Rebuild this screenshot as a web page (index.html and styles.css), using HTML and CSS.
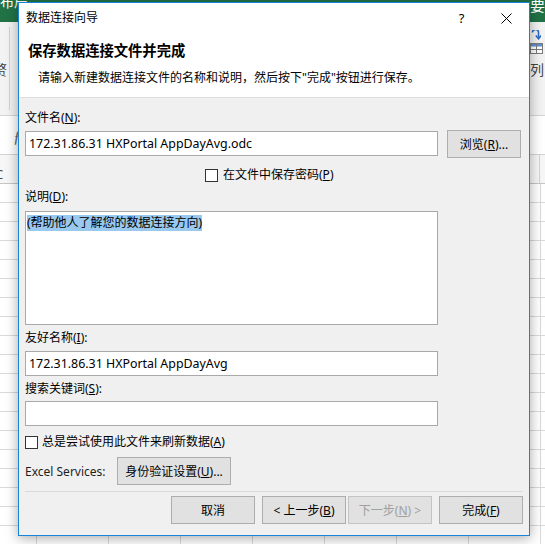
FILE: index.html
```html
<!DOCTYPE html>
<html lang="zh-CN">
<head>
    <meta charset="UTF-8">
    <title>数据连接向导</title>
    <link rel="stylesheet" href="styles.css">
</head>
<body>
    <!-- Excel window behind the dialog -->
    <div class="excel">
        <div class="tabs">
            <span class="tab-text">布局</span>
            <span class="tab-text tab-right">要</span>
        </div>
        <div class="ribbon">
            <div class="ribbon-left">
                <span class="cut-glyph">赘</span>
                <span class="ribbon-sep"></span>
            </div>
            <div class="ribbon-right">
                <svg class="rb-arrow" width="10" height="10" viewBox="0 0 10 10">
                    <path d="M1.5 2.5 A3 3 0 0 1 7.5 2.5 L7.5 8" fill="none" stroke="#2b6cc4" stroke-width="1.6"/>
                    <path d="M4.8 5.6 L7.5 8.8 L10 5.6" fill="none" stroke="#2b6cc4" stroke-width="1.6"/>
                </svg>
                <svg class="rb-grid" width="13" height="11" viewBox="0 0 13 11">
                    <rect x="0.5" y="0.5" width="12" height="10" fill="#fff" stroke="#7a7a7a"/>
                    <rect x="1" y="1" width="11" height="2.5" fill="#5b8fd4"/>
                    <path d="M6.5 1 V10 M1 6.5 H12" stroke="#7a7a7a"/>
                </svg>
                <span class="rb-label">列</span>
            </div>
        </div>
        <div class="formula-bar"><span class="fx">ƒ</span></div>
        <div class="col-heads"><span class="col-c">C</span></div>
        <div class="cells"></div>
    </div>

    <div class="dialog">
        <div class="titlebar">
            <span class="title">数据连接向导</span>
            <div class="caption-btns">
                <span class="cap-btn help">?</span>
                <span class="cap-btn">
                    <svg width="11" height="11" viewBox="0 0 11 11">
                        <path d="M0.5 0.5 L10.5 10.5 M10.5 0.5 L0.5 10.5" stroke="#000" stroke-width="1"/>
                    </svg>
                </span>
            </div>
        </div>

        <div class="header">
            <h1>保存数据连接文件并完成</h1>
            <p>请输入新建数据连接文件的名称和说明，然后按下"完成"按钮进行保存。</p>
        </div>

        <div class="body">
            <div class="field-label">文件名(<u>N</u>):</div>
            <div class="file-row">
                <div class="textbox">172.31.86.31 HXPortal AppDayAvg.odc</div>
                <button class="btn browse">浏览(<u>R</u>)...</button>
            </div>

            <div class="check-row save-pwd">
                <span class="checkbox"></span>
                <span>在文件中保存密码(<u>P</u>)</span>
            </div>

            <div class="field-label desc-label">说明(<u>D</u>):</div>
            <div class="textarea"><span class="selected">(帮助他人了解您的数据连接方向)</span></div>

            <div class="field-label">友好名称(<u>I</u>):</div>
            <div class="textbox wide">172.31.86.31 HXPortal AppDayAvg</div>

            <div class="field-label">搜索关键词(<u>S</u>):</div>
            <div class="textbox wide keywords"></div>

            <div class="check-row always">
                <span class="checkbox"></span>
                <span>总是尝试使用此文件来刷新数据(<u>A</u>)</span>
            </div>

            <div class="services-row">
                <span class="services-label">Excel Services:</span>
                <button class="btn auth">身份验证设置(<u>U</u>)...</button>
            </div>

            <div class="divider"></div>

            <div class="button-row">
                <button class="btn nav">取消</button>
                <button class="btn nav back">&lt; 上一步(<u>B</u>)</button>
                <button class="btn nav" disabled>下一步(<u>N</u>) &gt;</button>
                <button class="btn nav finish">完成(<u>F</u>)</button>
            </div>
        </div>
    </div>
</body>
</html>
```

FILE: styles.css
```css
* {
    box-sizing: border-box;
}
html, body {
    margin: 0;
    padding: 0;
}
body {
    width: 545px;
    height: 544px;
    overflow: hidden;
    position: relative;
    font-family: "Noto Sans", "Noto Sans CJK SC", sans-serif;
    font-size: 12px;
    color: #000;
    background: #fff;
}

/* ---- excel background ---- */
.excel {
    display: flex;
    flex-direction: column;
    height: 544px;
}
.tabs {
    height: 22px;
    flex: none;
    background: #217346;
    color: #fff;
    display: flex;
    justify-content: space-between;
    overflow: hidden;
}
.tab-text {
    font-size: 14px;
    line-height: 16px;
    margin-top: -6px;
}
.tab-right {
    margin-top: -3px;
    font-size: 15px;
}
.ribbon {
    height: 94px;
    flex: none;
    background: #f3f3f3;
    border-bottom: 1px solid #d5d5d5;
    display: flex;
    justify-content: space-between;
    overflow: hidden;
}
.ribbon-left {
    display: flex;
}
.cut-glyph {
    font-size: 14px;
    line-height: 16px;
    color: #444;
    margin: 40px 0 0 -7px;
}
.ribbon-sep {
    width: 1px;
    height: 83px;
    margin: 5px 0 0 2px;
    background: #d2d2d2;
}
.ribbon-right {
    width: 15px;
    display: flex;
    flex-direction: column;
    padding-top: 8px;
}
.rb-arrow {
    margin-left: 1px;
}
.rb-grid {
    margin-top: 3px;
}
.rb-label {
    font-size: 14px;
    line-height: 16px;
    color: #444;
    margin-top: 8px;
}
.formula-bar {
    height: 39px;
    flex: none;
    background: #fff;
    border-bottom: 1px solid #d4d4d4;
}
.fx {
    display: inline-block;
    margin: 12px 0 0 13px;
    font-family: "Liberation Serif", serif;
    font-style: italic;
    font-size: 16px;
    color: #666;
}
.col-heads {
    height: 29px;
    flex: none;
    background: #f7f7f7 linear-gradient(to right, transparent 539px, #d4d4d4 539px, #d4d4d4 540px, transparent 540px);
    border-bottom: 1px solid #c6c6c6;
    overflow: hidden;
}
.col-c {
    display: inline-block;
    margin: 10px 0 0 -5px;
    font-size: 13px;
    color: #444;
}
.cells {
    flex: 1;
    background-color: #fff;
    background-image:
        linear-gradient(to bottom, transparent 18px, #dadada 18px),
        linear-gradient(to right, transparent 36px, #dadada 36px, #dadada 37px, transparent 37px);
    background-size: 100% 19px, 72px 100%;
}

/* ---- dialog ---- */
.dialog {
    position: absolute;
    left: 18px;
    top: 2px;
    width: 512px;
    height: 534px;
    border: 1px solid #1883d7;
    background: #f0f0f0;
    box-shadow: 0 2px 12px rgba(0, 0, 0, 0.35);
    display: flex;
    flex-direction: column;
}
.titlebar {
    height: 30px;
    background: #fff;
    display: flex;
    justify-content: space-between;
}
.title {
    padding-left: 7px;
    line-height: 29px;
}
.caption-btns {
    display: flex;
}
.cap-btn {
    width: 46px;
    height: 30px;
    display: flex;
    align-items: center;
    justify-content: center;
}
.cap-btn.help {
    font-size: 13px;
    padding-left: 3px;
}
.header {
    background: #fff;
    padding: 8px 0 10px;
    border-bottom: 1px solid #dfdfdf;
}
.header h1 {
    margin: 0 0 8px 9px;
    font-size: 14.3px;
    line-height: 20px;
    font-weight: bold;
}
.header p {
    margin: 0 0 0 19px;
    line-height: 18px;
}
.body {
    flex: 1;
    padding: 12px 6px 0 6px;
    display: flex;
    flex-direction: column;
}
.field-label {
    line-height: 16px;
    margin-top: 5px;
}
.body > .field-label:first-child {
    margin-top: 0;
}
.desc-label {
    margin-top: 6px;
}
.textbox {
    height: 25px;
    width: 413px;
    background: #fff;
    border: 1px solid #a9a9a9;
    padding: 0 3px;
    font-size: 12.4px;
    line-height: 23px;
    white-space: nowrap;
}
.wide {
    margin-top: 5px;
}
.keywords {
    margin-top: 4px;
}
.file-row {
    display: flex;
    margin-top: 4px;
}
.file-row .textbox {
    margin-top: 1px;
}
.btn {
    font-family: inherit;
    font-size: 12px;
    color: #000;
    height: 28px;
    padding: 0;
    background: #e1e1e1;
    border: 1px solid #adadad;
}
.btn:disabled {
    color: #a0a0a0;
    border-color: #c4c4c4;
}
.browse {
    width: 74px;
    margin-left: 9px;
}
.check-row {
    display: flex;
    align-items: center;
    gap: 5px;
    line-height: 16px;
}
.checkbox {
    width: 13px;
    height: 13px;
    background: #fff;
    border: 1px solid #333;
}
.save-pwd {
    margin: 9px 0 0 180px;
}
.textarea {
    height: 114px;
    width: 413px;
    margin-top: 6px;
    background: #fff;
    border: 1px solid #a9a9a9;
    padding: 2px 1px;
}
.selected {
    display: inline-block;
    line-height: 16px;
    background: #99c9ef;
}
.always {
    margin-top: 8px;
    gap: 4px;
}
.services-row {
    display: flex;
    align-items: center;
    margin-top: 7px;
}
.services-label {
    width: 92px;
    color: #1e1e1e;
}
.auth {
    width: 114px;
}
.divider {
    height: 1px;
    margin-top: 6px;
    background: #dadada;
}
.button-row {
    display: flex;
    justify-content: flex-end;
    margin-top: 4px;
}
.nav {
    width: 84px;
    margin-left: 7px;
}
.nav.back + .nav {
    margin-left: 2px;
}
```
